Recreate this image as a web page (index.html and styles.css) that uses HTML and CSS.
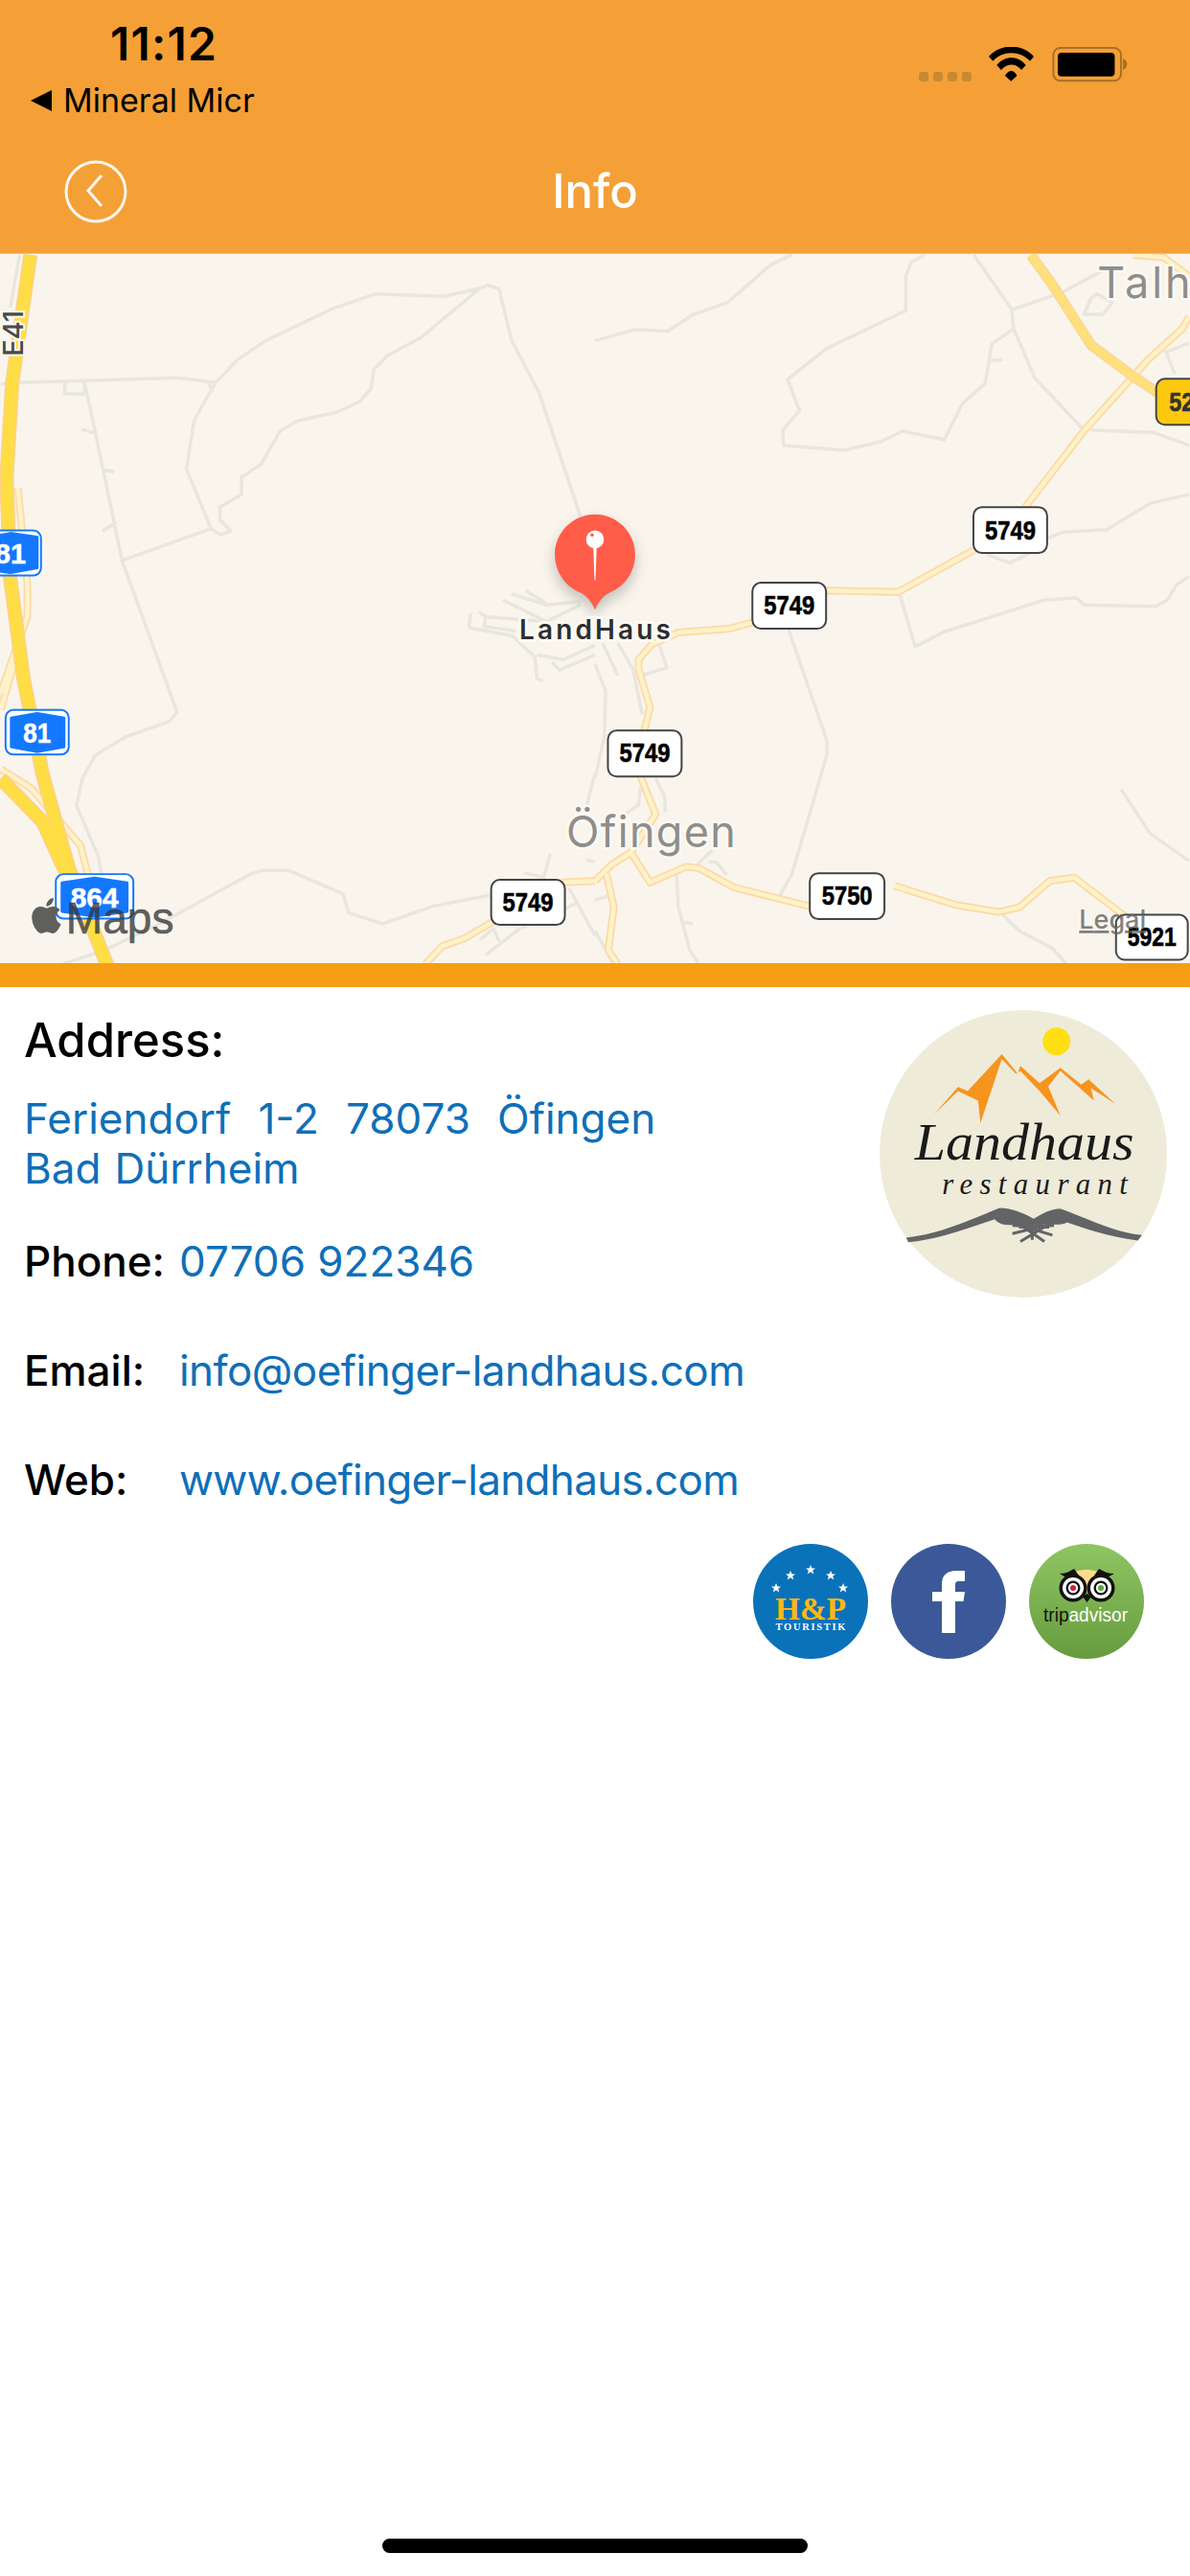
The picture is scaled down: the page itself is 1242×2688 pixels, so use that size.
FILE: index.html
```html
<!DOCTYPE html>
<html lang="en">
<head>
<meta charset="utf-8">
<title>Info</title>
<link rel="stylesheet" href="styles.css">
</head>
<body>
<div class="screen">
  <header class="header">
    <div class="status">
      <div class="status-left">
        <div class="time">11:12</div>
        <div class="crumb">
          <svg class="crumb-arrow" viewBox="0 0 22 22"><path d="M22 0V22L0 11Z"/></svg>
          <span>Mineral Micr</span>
        </div>
      </div>
      <div class="status-right">
        <div class="signal"><i></i><i></i><i></i><i></i></div>
        <svg class="wifi" viewBox="275 58 142 108"><path d="M275 88C310 46 382 46 417 88L405 102C372 68 320 68 288 102ZM300 115C325 84 368 84 392 115L378 130C358 108 335 108 314 130ZM326 148C338 128 354 128 364 148L345 166Z"/></svg>
        <svg class="battery" viewBox="475 57 240 112"><rect class="bat-frame" x="478" y="60" width="214" height="104" rx="22"/><rect x="492" y="75" width="180" height="75" rx="12"/><path class="bat-nub" d="M698 93C708 98 712 105 711 112C711 120 706 126 698 130Z"/></svg>
      </div>
    </div>
    <div class="nav">
      <svg class="back" viewBox="0 0 66 66"><circle cx="33" cy="33" r="31"/><path d="M39 16L25 32L39 48"/></svg>
      <h1 class="title">Info</h1>
      <span></span>
    </div>
  </header>

  <svg class="map" viewBox="0 264 1242 741">
    <defs>
      <path id="pale-left" d="M45 500L70 700V770L30 860L0 930M42 850L0 965M0 1090L80 1130L210 1250L240 1340M1120 1500L1165 1462L1225 1445L1300 1410M1480 1328L1568 1325"/>
      <path id="pale-right" d="M0 1325L45 1290L95 1265L145 1328L240 1295L275 1298L365 1338L565 1378M790 1335L950 1375L1065 1390L1120 1380L1200 1325L1265 1318L1400 1400M95 1265L160 1185L120 1105M130 1010L145 960L115 880V860L150 828L220 803L355 795L415 782M610 715L800 718L1000 630M1135 540L1290 380L1460 230L1550 165L1568 140M30 1310L50 1380L35 1470L60 1500M1420 10L1500 15L1568 55"/>
    </defs>
    <g transform="translate(0 260) scale(.396 .4975)">
      <path class="grey" d="M1265 80L1170 97L990 92L875 123L700 190L625 230L565 280L510 358L490 460L555 585L580 598L607 590L578 565V540L635 513V477L687 450L737 380L785 358L888 340L948 318L977 290L985 250L1020 222L1110 183L1265 80L1285 73L1315 82L1348 190L1420 298L1530 560M0 282L55 278L220 274L465 268L570 278M170 278L168 302H222L220 274L250 385L320 652L465 970L445 990L330 1022L250 1060L215 1110L200 1167L258 1275L275 1350M320 652L555 585M213 376L250 385M268 460L300 466M268 590L305 572M545 275L560 297M162 1500L275 1470L430 1410L660 1310L690 1303H760L903 1352L918 1392L1008 1415L1140 1378L1290 1355M50 10L25 120M1235 793L1240 762M1235 793L1350 810L1410 855L1415 900L1432 905M1262 760L1280 770L1440 780M1325 735L1440 780L1530 745M1348 722L1440 745L1530 738M1385 715L1440 742M1280 770L1275 790L1360 800M1415 850L1485 860L1568 830M1455 865L1475 882L1568 850M1450 1268L1432 1320M1380 1308L1435 1318M1500 1340L1568 1440M1280 1480L1370 1425L1525 1370M1265 1448L1300 1425L1315 1452M1568 1100L1545 1170M1545 1280L1568 1285"/>
      <use href="#pale-left" class="road-case"/>
      <use href="#pale-left" class="road-fill"/>
      <path class="moto-case" d="M78 10L30 280L15 480L25 690L60 900L110 1100L180 1300L285 1510M0 1110L110 1200L190 1340"/>
      <path class="moto-fill" d="M78 10L30 280L15 480L25 690L60 900L110 1100L180 1300L285 1510M0 1110L110 1200L190 1340"/>
    </g>
    <g transform="translate(621 260) scale(.396 .4975)">
      <path class="grey" d="M0 190L105 167L192 170L260 135L350 110L465 30L520 10M870 10L835 25L820 55V127L610 207L508 272L540 337L495 378L498 410L658 420L755 402L812 380L922 398L970 322L1030 280L1047 197L1105 165L1160 268L1290 378M1000 10L1100 125L1105 165M1100 125L1230 90L1370 30M1045 232L1075 230M1290 135L1310 100L1325 92L1365 110L1340 135ZM1505 210L1530 260M1505 215L1568 195M1310 378L1475 383L1568 410M1195 605L1235 592L1350 587L1465 532L1568 513M1035 640L1095 657L1150 635M805 725L845 833L920 802L1185 735L1270 730L1290 745L1480 748L1510 735L1535 703L1568 685M510 795L612 1030V1060L520 1310L488 1355M1388 1132L1465 1225L1568 1283M1075 1395L1120 1430L1205 1465L1245 1500M170 830L190 877L125 893M20 825L60 893M60 825L100 880L125 975M0 870L28 925L25 1020L0 1110M160 1110L185 1150V1180M120 1130L115 1165L70 1190M215 1310L220 1380L250 1470L275 1500M225 1410L258 1415M270 1290L310 1260M300 1285H320L348 1312M0 1430L50 1500M0 1365L40 1355"/>
      <use href="#pale-right" class="road-case"/>
      <use href="#pale-right" class="road-fill"/>
      <path class="upper-case" d="M1150 10L1205 70L1310 200L1420 265L1485 300"/>
      <path class="upper-fill" d="M1150 10L1205 70L1310 200L1420 265L1485 300"/>
    </g>

    <text class="town" x="591" y="884" textLength="180">Öfingen</text>
    <text class="town" x="1146" y="310">Talh</text>
    <text class="e41" transform="translate(23 371) rotate(-90)" textLength="48" lengthAdjust="spacingAndGlyphs">E41</text>

    <path class="pin" d="M621 636C618 628 613 622 606 618C590 612 579 596 579 578C579 555 598 536 621 536C644 536 663 555 663 578C663 596 652 612 636 618C629 622 624 628 621 636Z"/>
    <circle class="pin-head" cx="621" cy="562.3" r="9.3"/>
    <circle class="pin-dot" cx="618" cy="557.7" r="1.8"/>
    <path class="pin-head" d="M619.2 570H622.8L621.5 605H620.5Z"/>
    <text class="place" x="542" y="667" textLength="158">LandHaus</text>

    <rect class="sign" x="785.5" y="607.5" width="77" height="48" rx="9"/>
    <text class="sign-num" x="824" y="641" textLength="53" lengthAdjust="spacingAndGlyphs" text-anchor="middle">5749</text>
    <rect class="sign" x="1016.5" y="528.5" width="77" height="48" rx="9"/>
    <text class="sign-num" x="1055" y="562" textLength="53" lengthAdjust="spacingAndGlyphs" text-anchor="middle">5749</text>
    <rect class="sign" x="634.5" y="762" width="77" height="48" rx="9"/>
    <text class="sign-num" x="673" y="795" textLength="53" lengthAdjust="spacingAndGlyphs" text-anchor="middle">5749</text>
    <rect class="sign" x="512.5" y="918" width="77" height="47" rx="9"/>
    <text class="sign-num" x="551" y="951" textLength="53" lengthAdjust="spacingAndGlyphs" text-anchor="middle">5749</text>
    <rect class="sign" x="845.5" y="911" width="78" height="48" rx="9"/>
    <text class="sign-num" x="884.5" y="944" textLength="53" lengthAdjust="spacingAndGlyphs" text-anchor="middle">5750</text>
    <rect class="sign" x="1165.5" y="954.5" width="75" height="47" rx="9"/>
    <text class="sign-num" x="1203" y="987" textLength="51" lengthAdjust="spacingAndGlyphs" text-anchor="middle">5921</text>
    <rect class="sign sign-yellow" x="1207.5" y="394.5" width="60" height="48" rx="9"/>
    <text class="sign-num sign-num-dark" x="1221" y="428" textLength="26" lengthAdjust="spacingAndGlyphs">52</text>

    <rect class="shield" x="-30" y="553" width="72" height="47" rx="8"/>
    <path class="shield-in" d="M-26 562L10 556L38 560V592L10 597L-26 592Z"/>
    <text class="shield-num" x="-6" y="587">81</text>
    <rect class="shield" x="5" y="740.5" width="66" height="46.5" rx="8"/>
    <path class="shield-in" d="M11 749L38 744L66 749V779L38 784L11 779Z"/>
    <text class="shield-num" x="38" y="775" text-anchor="middle" textLength="29" lengthAdjust="spacingAndGlyphs">81</text>
    <rect class="shield" x="57.5" y="912" width="81" height="46.5" rx="8"/>
    <path class="shield-in" d="M64 921L98 916L132 921V951L98 956L64 951Z"/>
    <text class="shield-num" x="98" y="947" text-anchor="middle" textLength="50" lengthAdjust="spacingAndGlyphs">864</text>

    <path class="maps-mark" transform="translate(29 937) scale(1.55 1.54)" d="M12.152 6.896c-.948 0-2.415-1.078-3.96-1.04-2.04.027-3.91 1.183-4.961 3.014-2.117 3.675-.546 9.103 1.519 12.09 1.013 1.454 2.208 3.09 3.792 3.039 1.52-.065 2.09-.987 3.935-.987 1.831 0 2.35.987 3.96.948 1.637-.026 2.676-1.48 3.676-2.948 1.156-1.688 1.636-3.325 1.662-3.415-.039-.013-3.182-1.221-3.22-4.857-.026-3.04 2.48-4.494 2.597-4.559-1.429-2.09-3.623-2.324-4.39-2.376-2-.156-3.675 1.09-4.61 1.09zM15.53 3.83c.843-1.012 1.4-2.427 1.245-3.83-1.207.052-2.662.805-3.532 1.818-.78.896-1.454 2.338-1.273 3.714 1.338.104 2.715-.688 3.559-1.701"/>
    <text class="maps-word" x="68" y="974" textLength="113" lengthAdjust="spacingAndGlyphs">Maps</text>
    <text class="legal" x="1127" y="969" textLength="70">Legal</text>
  </svg>
  <div class="rule"></div>

  <main class="details">
    <div class="contact">
      <h2 class="address-label">Address:</h2>
      <a class="link address" href="#">Feriendorf&nbsp; 1-2&nbsp; 78073&nbsp; Öfingen<br>Bad Dürrheim</a>
      <div class="row row-first"><span class="label">Phone:</span><a class="link" href="#">07706 922346</a></div>
      <div class="row"><span class="label">Email:</span><a class="link link-mail" href="#">info@oefinger-landhaus.com</a></div>
      <div class="row"><span class="label">Web:</span><a class="link link-web" href="#">www.oefinger-landhaus.com</a></div>
    </div>
    <svg class="logo" viewBox="85 72 898 898">
      <circle class="logo-bg" cx="534" cy="521" r="449"/>
      <circle class="logo-sun" cx="638" cy="170" r="43"/>
      <path class="logo-peak" d="M255 398L330 312L360 325L467 210L510 262L515 272L525 246L585 300L650 252L715 305L738 288L822 365L745 315L755 355L650 262L612 310L650 402L585 325L525 262L510 270L467 225L400 425L393 355L330 325Z"/>
      <text class="logo-script" x="195" y="540" textLength="685" lengthAdjust="spacingAndGlyphs">Landhaus</text>
      <text class="logo-sub" x="280" y="647" textLength="580" lengthAdjust="spacing">restaurant</text>
      <path class="logo-fork" d="M168 783C280 770 360 730 460 690C500 690 540 708 566 724C592 708 620 692 650 692C730 720 810 765 905 775L892 792C800 780 730 755 670 735C655 745 630 742 610 740L570 745L520 742C490 745 460 745 445 725C380 745 290 785 175 797Z"/>
      <path class="logo-tines" d="M500 725L600 795M505 738L625 775M520 750L630 745M640 725L525 795M630 738L500 770M615 750L500 745M562 740V790"/>
    </svg>
  </main>

  <div class="social">
    <svg class="badge" viewBox="0 0 120 120">
      <circle class="hp-bg" cx="60" cy="60" r="60"/>
      <path class="hp-star" d="M24 41L25.5 44.5H29L26.2 46.7L27.2 50.5L24 48.3L20.8 50.5L21.8 46.7L19 44.5H22.5ZM39 28L40.5 31.5H44L41.2 33.7L42.2 37.5L39 35.3L35.8 37.5L36.8 33.7L34 31.5H37.5ZM60 22L61.5 25.5H65L62.2 27.7L63.2 31.5L60 29.3L56.8 31.5L57.8 27.7L55 25.5H58.5ZM81 28L82.5 31.5H86L83.2 33.7L84.2 37.5L81 35.3L77.8 37.5L78.8 33.7L76 31.5H79.5ZM94 41L95.5 44.5H99L96.2 46.7L97.2 50.5L94 48.3L90.8 50.5L91.8 46.7L89 44.5H92.5Z"/>
      <text class="hp-name" x="60" y="79" text-anchor="middle" textLength="74" lengthAdjust="spacingAndGlyphs">H&amp;P</text>
      <text class="hp-sub" x="60" y="90" text-anchor="middle" textLength="73">TOURISTIK</text>
    </svg>
    <svg class="badge" viewBox="0 0 120 120">
      <circle class="fb-bg" cx="60" cy="60" r="60"/>
      <path class="fb-f" d="M53 93V60H43V50H53V42C53 33 58 28 68 28H77V39H71C68 39 67 40 67 43V50H77L75.5 60H67V93Z"/>
    </svg>
    <svg class="badge" viewBox="0 0 120 120">
      <defs><linearGradient id="ta-grad" x1="0" y1="0" x2="0" y2="1"><stop offset="0" stop-color="#8fc562"/><stop offset="1" stop-color="#669c3e"/></linearGradient></defs>
      <circle cx="60" cy="60" r="60" fill="url(#ta-grad)"/>
      <path class="ta-dome" d="M42 33C50 25 70 25 78 33L68 42L60 50L52 42Z"/>
      <path class="ta-dark" d="M32 31C38 31 42 29 47 26L52 33L40 36ZM89 31C83 31 78 29 73 26L68 33L80 36ZM56 55L60.5 61L65 55L60.5 52Z"/>
      <circle class="ta-dark" cx="46" cy="46" r="14.5"/><circle class="ta-dark" cx="75" cy="46" r="14.5"/>
      <circle class="ta-white" cx="46" cy="46" r="11"/><circle class="ta-white" cx="75" cy="46" r="11"/>
      <circle class="ta-dark" cx="46" cy="46" r="7.5"/><circle class="ta-dark" cx="75" cy="46" r="7.5"/>
      <circle class="ta-white" cx="46" cy="46" r="5.2"/><circle class="ta-white" cx="75" cy="46" r="5.2"/>
      <circle class="ta-red" cx="46" cy="46" r="3"/><circle class="ta-green" cx="75" cy="46" r="3"/>
      <text class="ta-word" x="15" y="81" textLength="88" lengthAdjust="spacingAndGlyphs"><tspan class="ta-trip">trip</tspan>advisor</text>
    </svg>
  </div>

  <div class="home"></div>
</div>
</body>
</html>
```
FILE: styles.css
```css
* { box-sizing: border-box; }
html, body { margin: 0; padding: 0; background: #fff; }
.screen {
  width: 1242px;
  height: 2688px;
  display: flex;
  flex-direction: column;
  font-family: Inter, "Liberation Sans", sans-serif;
  overflow: hidden;
}

/* header */
.header { background: #f4a037; height: 265px; border-bottom: 1px solid #c9c4b8; flex: none; }
.status { height: 150px; display: flex; justify-content: space-between; }
.status-left { padding: 19px 0 0 32px; }
.time { margin-left: 83px; font-size: 48px; line-height: 54px; font-weight: 600; color: #000; letter-spacing: 1.2px; }
.crumb { display: flex; align-items: center; gap: 12px; margin-top: 14px; font-size: 34px; line-height: 36px; color: #000; }
.crumb-arrow { width: 22px; height: 22px; fill: #000; }
.status-right { display: flex; align-items: flex-start; padding: 49px 64px 0 0; }
.signal { display: flex; gap: 5px; margin: 26px 18px 0 0; }
.signal i { width: 10px; height: 10px; border-radius: 3px; background: #c58a33; }
.wifi { width: 47px; height: 36px; fill: #000; margin-right: 19px; }
.battery { width: 80px; height: 37px; }
.bat-frame { fill: none; stroke: #a96f27; stroke-width: 6px; }
.bat-nub { fill: #a96f27; }
.nav { height: 114px; display: grid; grid-template-columns: 1fr auto 1fr; align-items: center; padding-bottom: 14px; }
.back { width: 66px; height: 66px; margin-left: 67px; fill: none; stroke: #fff; stroke-width: 3px; opacity: .92; }
.title { margin: 0; font-size: 49px; line-height: 60px; font-weight: 500; color: #fff; }

/* map */
.map { display: block; width: 1242px; height: 740px; flex: none; background: #f9f5ed; font-family: Inter, "Liberation Sans", sans-serif; }
.map path { vector-effect: non-scaling-stroke; }
.grey { fill: none; stroke: #e8e6de; stroke-width: 3.5px; stroke-linejoin: round; }
.road-case { fill: none; stroke: #fcd9a6; stroke-width: 8px; stroke-linejoin: round; }
.road-fill { fill: none; stroke: #fff2c8; stroke-width: 4.5px; stroke-linejoin: round; }
.moto-case { fill: none; stroke: #fcd08c; stroke-width: 15px; stroke-linejoin: round; }
.moto-fill { fill: none; stroke: #ffdd45; stroke-width: 12px; stroke-linejoin: round; }
.upper-case { fill: none; stroke: #fcd596; stroke-width: 11px; stroke-linejoin: round; }
.upper-fill { fill: none; stroke: #ffe07d; stroke-width: 8px; stroke-linejoin: round; }
.town { font-size: 45px; letter-spacing: 3px; fill: #8f8e89; stroke: #fbf9f4; stroke-width: 5px; paint-order: stroke; }
.e41 { font-size: 29px; font-weight: 500; fill: #4a4a48; stroke: #fbf9f4; stroke-width: 4px; paint-order: stroke; }
.pin { fill: #ff5c4a; filter: drop-shadow(0 7px 7px rgba(0,0,0,.22)); }
.pin-head { fill: #fff; }
.pin-dot { fill: #ff5c4a; }
.place { font-size: 28px; font-weight: 600; fill: #2e2e2e; stroke: #fbf9f4; stroke-width: 6px; paint-order: stroke; }
.sign { fill: #fff; stroke: #444; stroke-width: 2px; }
.sign-yellow { fill: #fdc90e; }
.sign-num { font-family: "Liberation Sans", sans-serif; font-size: 28px; font-weight: 700; fill: #000; stroke: #000; stroke-width: .6px; }
.sign-num-dark { fill: #333; stroke: #333; }
.shield { fill: #fff; stroke: #1478ff; stroke-width: 2px; }
.shield-in { fill: #1478ff; stroke: #1478ff; stroke-width: 3px; stroke-linejoin: round; }
.shield-num { font-family: "Liberation Sans", sans-serif; font-size: 29px; font-weight: 700; fill: #fff; stroke: #fff; stroke-width: .5px; }
.maps-mark { fill: #5f5f5c; }
.maps-word { font-family: "Liberation Sans", sans-serif; font-size: 47px; fill: rgba(55,55,55,.78); stroke: rgba(55,55,55,.78); stroke-width: .6px; }
.legal { font-size: 27px; font-weight: 500; fill: rgba(95,95,95,.8); text-decoration: underline; }
.rule { height: 25px; flex: none; background: #f59e13; }

/* details */
.details { display: flex; justify-content: space-between; align-items: flex-start; padding: 24px 24px 0 25px; flex: none; height: 503px; }
.contact { width: 850px; padding-top: 2px; }
.address-label { margin: 0; font-size: 49px; line-height: 60px; font-weight: 500; color: #000; }
.link { font-size: 44px; color: #0f6fb8; text-decoration: none; }
.address { display: block; margin-top: 25px; line-height: 52px; word-spacing: 1.7px; }
.link-mail { letter-spacing: -.54px; }
.link-web { letter-spacing: -.68px; }
.row { display: grid; grid-template-columns: 162px 1fr; height: 114px; align-items: start; line-height: 52px; }
.row-first { margin-top: 45px; }
.label { font-size: 44px; font-weight: 500; color: #000; }
.logo { width: 300px; height: 300px; flex: none; }
.logo-bg { fill: #eeebd9; }
.logo-sun { fill: #ffdf12; }
.logo-peak { fill: #f7941e; }
.logo-script { font-family: "Liberation Serif", serif; font-style: italic; font-size: 165px; fill: #1a1a1a; }
.logo-sub { font-family: "Liberation Serif", serif; font-style: italic; font-size: 92px; fill: #1a1a1a; }
.logo-fork { fill: #636466; }
.logo-tines { fill: none; stroke: #636466; stroke-width: 9px; }

/* social */
.social { display: flex; justify-content: flex-end; gap: 24px; padding-right: 48px; margin-top: 78px; flex: none; }
.badge { width: 120px; height: 120px; display: block; }
.hp-bg { fill: #0a72b9; }
.hp-star { fill: #fff; }
.hp-name { font-family: "Liberation Serif", serif; font-weight: 700; font-size: 34px; fill: #fdb813; }
.hp-sub { font-family: "Liberation Serif", serif; font-weight: 700; font-size: 10.5px; fill: #fff; }
.fb-bg { fill: #3b5998; }
.fb-f { fill: #fff; }
.ta-dome { fill: #fddc8b; }
.ta-dark { fill: #111; }
.ta-white { fill: #fff; }
.ta-red { fill: #c8253a; }
.ta-green { fill: #5aa440; }
.ta-word { font-family: "Liberation Sans", sans-serif; font-size: 21px; fill: #fff; }
.ta-trip { fill: #111; }

/* home indicator */
.home { width: 444px; height: 15px; border-radius: 8px; background: #000; flex: none; align-self: center; margin-top: auto; margin-bottom: 24px; }
```
